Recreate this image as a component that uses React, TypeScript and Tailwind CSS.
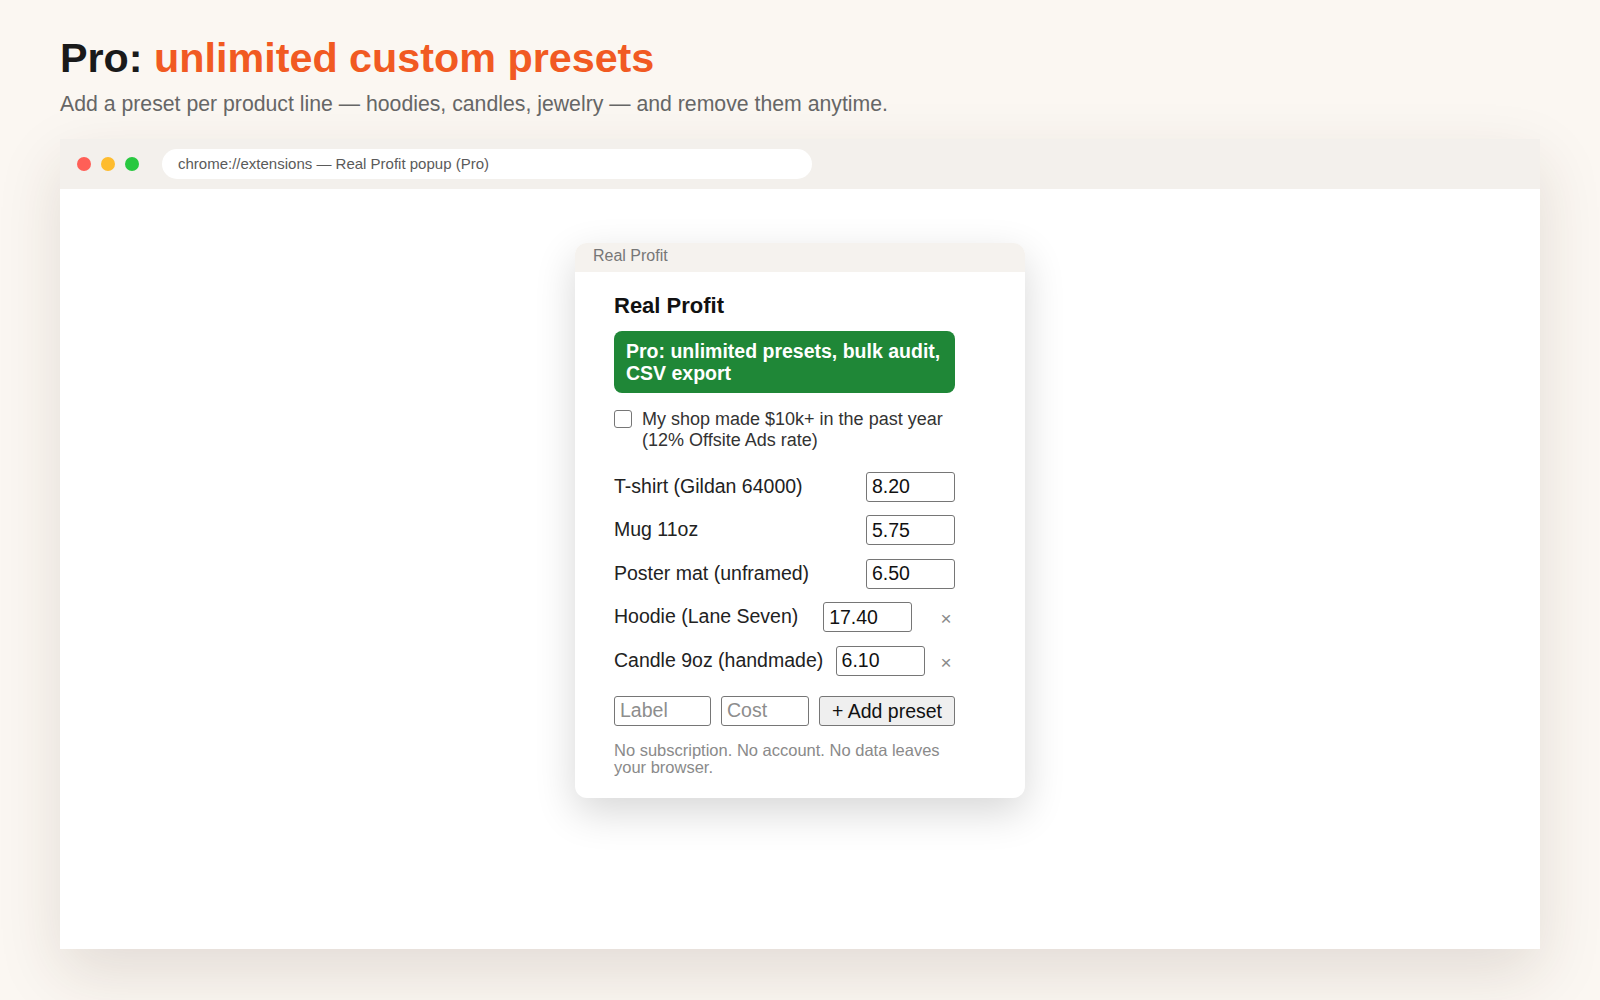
import React from "react"

interface Preset {
  label: string
  cost: string
  removable?: boolean
}

const presets: Preset[] = [
  { label: "T-shirt (Gildan 64000)", cost: "8.20" },
  { label: "Mug 11oz", cost: "5.75" },
  { label: "Poster mat (unframed)", cost: "6.50" },
  { label: "Hoodie (Lane Seven)", cost: "17.40", removable: true },
  { label: "Candle 9oz (handmade)", cost: "6.10", removable: true },
]

function PresetRow({ preset }: { preset: Preset }) {
  return (
    <div className="flex h-[30px] items-center justify-between text-[19.5px] text-[#222]">
      <span>{preset.label}</span>
      <input
        defaultValue={preset.cost}
        className="h-[30px] w-[89px] rounded-[3px] border border-[#767676] bg-white px-[5px] text-[19.5px] text-[#111] outline-none"
      />
      {preset.removable && (
        <button className="w-[18px] pt-[3px] text-center text-[19px] leading-none text-[#8a8a8a]">×</button>
      )}
    </div>
  )
}

function Popup() {
  return (
    <div className="w-[450px] self-start overflow-hidden rounded-[12px] bg-white shadow-[0_14px_40px_rgba(0,0,0,0.16)]">
      {/* fake window strip */}
      <div className="h-[29px] bg-[#f5f2ee] px-[18px] pt-[3px] text-[16px] leading-[20px] text-[#777]">
        Real Profit
      </div>

      <div className="pb-[22px] pl-[39px] pr-[70px] pt-[21px]">
        <div className="w-[341px]">
          <h2 className="text-[22px] font-bold leading-[1.2] text-[#111]">Real Profit</h2>

          <div className="mt-[11px] rounded-[8px] bg-[#1f8737] px-[12px] py-[9px] text-[19.5px] font-bold leading-[22px] text-white">
            Pro: unlimited presets, bulk audit, CSV export
          </div>

          <label className="mt-[16px] flex items-start gap-[10px] text-[18px] leading-[21px] text-[#333]">
            <span className="mt-[1.5px] h-[18px] w-[18px] shrink-0 rounded-[3px] border-[1.5px] border-[#767676] bg-white" />
            <span>My shop made $10k+ in the past year (12% Offsite Ads rate)</span>
          </label>

          <div className="mt-[21px] flex flex-col gap-[13.5px]">
            {presets.map((p) => (
              <PresetRow key={p.label} preset={p} />
            ))}
          </div>

          <div className="mt-[20px] flex h-[30px] gap-[10px]">
            <input
              placeholder="Label"
              className="h-[30px] w-[97px] rounded-[3px] border border-[#767676] bg-white px-[5px] text-[19.5px] outline-none placeholder:text-[#8d8d8d]"
            />
            <input
              placeholder="Cost"
              className="h-[30px] w-[88px] rounded-[3px] border border-[#767676] bg-white px-[5px] text-[19.5px] outline-none placeholder:text-[#8d8d8d]"
            />
            <button className="h-[30px] w-[136px] rounded-[3px] border border-[#767676] bg-[#efefef] text-[19.5px] text-[#111]">
              + Add preset
            </button>
          </div>

          <p className="mt-[16px] text-[16.5px] leading-[17.3px] text-[#8a8a8a]">
            No subscription. No account. No data leaves your browser.
          </p>
        </div>
      </div>
    </div>
  )
}

export default function App() {
  return (
    <div className="min-h-screen bg-[#fbf7f2] px-[60px] pb-[50px] pt-[34px] font-['Liberation_Sans',Arial,sans-serif]">
      <h1 className="text-[41.3px] font-bold leading-[1.2] text-[#1a1a1a]">
        Pro: <span className="text-[#f15a22]">unlimited custom presets</span>
      </h1>
      <p className="mt-[7px] text-[21.25px] leading-[1.3] text-[#666]">
        Add a preset per product line — hoodies, candles, jewelry — and remove them anytime.
      </p>

      {/* browser mock */}
      <div className="mt-[21px] flex h-[810px] flex-col bg-white shadow-[0_24px_60px_rgba(60,40,20,0.13)]">
        <div className="flex h-[50px] items-center bg-[#f3f0ec] px-[17px]">
          <div className="flex gap-[10px]">
            <span className="h-[14px] w-[14px] rounded-full bg-[#ff5f57]" />
            <span className="h-[14px] w-[14px] rounded-full bg-[#febc2e]" />
            <span className="h-[14px] w-[14px] rounded-full bg-[#28c840]" />
          </div>
          <div className="ml-[23px] flex h-[30px] w-[650px] items-center rounded-full bg-white px-[16px] text-[15px] text-[#5a5a5a]">
            chrome://extensions — Real Profit popup (Pro)
          </div>
        </div>

        <div className="flex flex-1 justify-center pt-[54px]">
          <Popup />
        </div>
      </div>
    </div>
  )
}
